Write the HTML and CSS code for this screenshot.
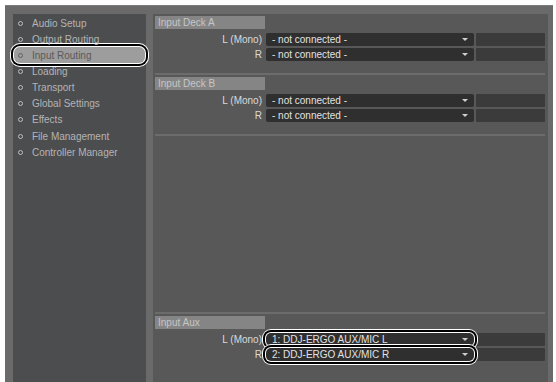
FILE: index.html
```html
<!DOCTYPE html>
<html lang="en">
<head>
    <meta charset="UTF-8">
    <title>Preferences - Input Routing</title>
    <link rel="stylesheet" href="styles.css">
</head>
<body>

    <div class="window">
        <div class="sidebar">
            <ul class="nav">
                <li class="nav-item"><span class="dot"></span>Audio Setup</li>
                <li class="nav-item"><span class="dot"></span>Output Routing</li>
                <li class="nav-item active"><span class="dot"></span>Input Routing</li>
                <li class="nav-item"><span class="dot"></span>Loading</li>
                <li class="nav-item"><span class="dot"></span>Transport</li>
                <li class="nav-item"><span class="dot"></span>Global Settings</li>
                <li class="nav-item"><span class="dot"></span>Effects</li>
                <li class="nav-item"><span class="dot"></span>File Management</li>
                <li class="nav-item"><span class="dot"></span>Controller Manager</li>
            </ul>
        </div>

        <div class="main">
            <div class="group">
                <div class="group-head"><span class="group-title">Input Deck A</span></div>
                <div class="row">
                    <span class="label">L (Mono)</span>
                    <div class="select">- not connected -<span class="arrow"></span></div>
                    <div class="extra"></div>
                </div>
                <div class="row">
                    <span class="label">R</span>
                    <div class="select">- not connected -<span class="arrow"></span></div>
                    <div class="extra"></div>
                </div>
            </div>

            <div class="group">
                <div class="group-head"><span class="group-title">Input Deck B</span></div>
                <div class="row">
                    <span class="label">L (Mono)</span>
                    <div class="select">- not connected -<span class="arrow"></span></div>
                    <div class="extra"></div>
                </div>
                <div class="row">
                    <span class="label">R</span>
                    <div class="select">- not connected -<span class="arrow"></span></div>
                    <div class="extra"></div>
                </div>
            </div>

            <div class="spacer"></div>

            <div class="group last">
                <div class="group-head"><span class="group-title">Input Aux</span></div>
                <div class="row">
                    <span class="label">L (Mono)</span>
                    <div class="select marked">1: DDJ-ERGO AUX/MIC L<span class="arrow"></span></div>
                    <div class="extra"></div>
                </div>
                <div class="row">
                    <span class="label">R</span>
                    <div class="select marked">2: DDJ-ERGO AUX/MIC R<span class="arrow"></span></div>
                    <div class="extra"></div>
                </div>
            </div>
        </div>
    </div>

</body>
</html>
```

FILE: styles.css
```css
body {
    margin: 0;
    background-color: #fff;
    font-family: 'Liberation Sans', Arial, sans-serif;
    font-size: 10px;
}
.window {
    display: flex;
    height: 377px;
    margin: 5px 3px 0 5px;
    padding: 8px 5px 0 8px;
    gap: 7px;
    background-color: #6a6a6a;
    border-top: 1px solid #7c7c7c;
    box-sizing: border-box;
}
.sidebar {
    width: 133px;
    background-color: #4c4d4f;
    padding-top: 1px;
}
.nav {
    list-style: none;
    margin: 0;
    padding: 0;
}
.nav-item {
    display: flex;
    align-items: center;
    height: 16px;
    margin: 0 0 0.2px 0;
    padding-left: 5px;
    color: #b4b4b4;
}
.nav-item .dot {
    width: 3px;
    height: 3px;
    border: 1.5px solid #bcbcbc;
    border-radius: 50%;
    margin-right: 9px;
}
.nav-item.active {
    background-color: #9d9d9d;
    color: #5a5a5a;
    border-radius: 6px;
    margin: 0 1px 0 1px;
    padding-left: 4px;
    box-shadow: 0 0 0 1px #fff, 0 0 0 3px #000, 0 0 0 4px #fff;
}
.nav-item.active .dot {
    border-color: #606060;
}
.main {
    flex: 1;
    display: flex;
    flex-direction: column;
    background-color: #585858;
    padding: 2px 3px 0 2px;
}
.group {
    border-bottom: 2px solid #6c6c6c;
    padding-bottom: 10px;
    margin-bottom: 2px;
}
.group.last {
    border-bottom: none;
    padding-bottom: 17px;
}
.group-head {
    height: 13px;
    margin-bottom: 4px;
}
.group-title {
    display: block;
    width: 107px;
    height: 13px;
    line-height: 13px;
    padding-left: 3px;
    background-color: #858585;
    color: #c6c6c6;
}
.row {
    display: flex;
    align-items: center;
    height: 13px;
    margin-bottom: 2px;
}
.label {
    width: 107px;
    text-align: right;
    color: #dadada;
    padding-right: 4px;
}
.select {
    position: relative;
    width: 202px;
    height: 13px;
    line-height: 13px;
    padding-left: 6px;
    background-color: #2f2f2f;
    color: #e2e2e2;
    border-radius: 2px;
}
.select.marked {
    box-shadow: 0 0 0 1px #fff, 0 0 0 3px #000, 0 0 0 4px #fff;
    border-radius: 5px;
}
.arrow {
    position: absolute;
    right: 6px;
    top: 5px;
    border-left: 3px solid transparent;
    border-right: 3px solid transparent;
    border-top: 3px solid #cfcfcf;
}
.extra {
    width: 69px;
    height: 13px;
    margin-left: 2px;
    background-color: #3b3b3b;
    border-radius: 1px;
}
.spacer {
    flex: 1;
    border-bottom: 2px solid #6c6c6c;
    margin-bottom: 2px;
}
```
